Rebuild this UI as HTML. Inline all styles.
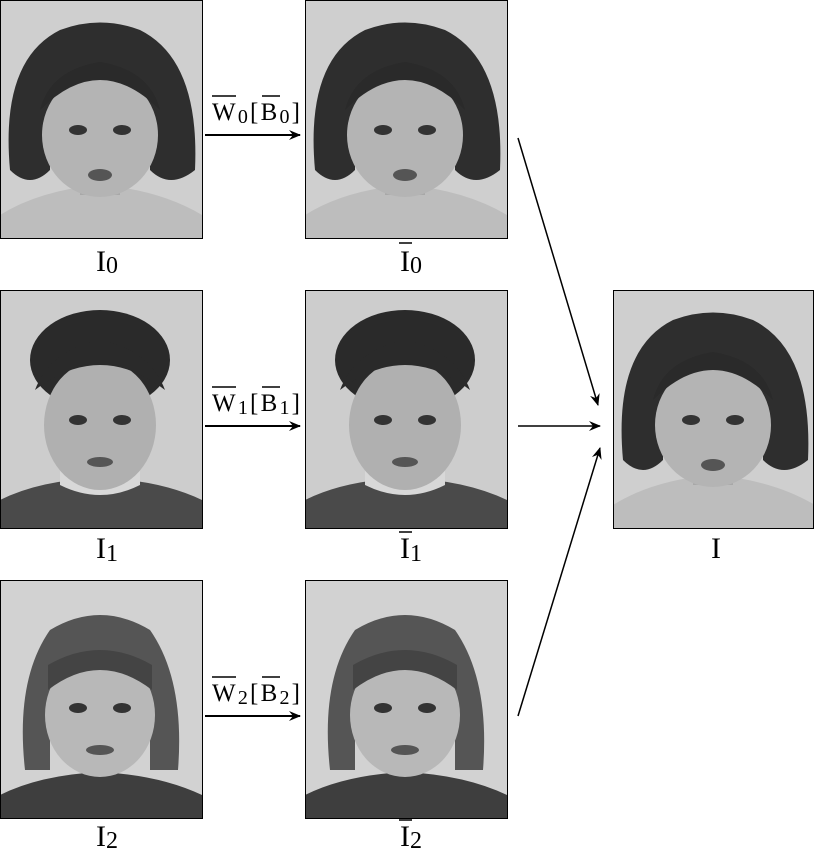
<!DOCTYPE html>
<html><head><meta charset="utf-8"><style>
body{margin:0;background:#fff;width:814px;height:852px;overflow:hidden}
svg{display:block}
text{font-family:"Liberation Serif",serif;fill:#000}
</style></head><body>
<svg width="814" height="852" viewBox="0 0 814 852" xmlns="http://www.w3.org/2000/svg">
<defs>
<marker id="ah" markerWidth="12" markerHeight="10" refX="11" refY="5" orient="auto" markerUnits="userSpaceOnUse"><path d="M0,0 L12,5 L0,10 L4,5 z" fill="#000"/></marker>
<g id="pA">
<rect width="202" height="238" fill="#cfcfcf"/>
<path d="M0,238 L0,215 Q40,190 100,185 Q160,190 202,215 L202,238 z" fill="#bdbdbd"/>
<path d="M10,170 Q0,60 60,30 Q100,15 140,30 Q200,60 195,170 Q170,190 150,170 L150,110 L50,110 L50,170 Q30,190 10,170z" fill="#2e2e2e"/>
<rect x="80" y="160" width="40" height="35" fill="#a8a8a8"/>
<ellipse cx="100" cy="135" rx="58" ry="62" fill="#b4b4b4"/>
<path d="M40,110 Q100,50 160,110 Q150,70 100,62 Q50,70 40,110z" fill="#2a2a2a"/>
<ellipse cx="78" cy="130" rx="9" ry="5" fill="#333"/><ellipse cx="122" cy="130" rx="9" ry="5" fill="#333"/>
<ellipse cx="100" cy="175" rx="12" ry="6" fill="#555"/>
</g>
<g id="pB">
<rect width="202" height="238" fill="#cdcdcd"/>
<path d="M0,238 L0,210 Q40,190 100,188 Q160,190 202,210 L202,238 z" fill="#4a4a4a"/>
<path d="M60,195 Q100,215 140,195 L140,180 L60,180z" fill="#d8d8d8"/>
<ellipse cx="100" cy="70" rx="70" ry="50" fill="#2a2a2a"/>
<ellipse cx="100" cy="135" rx="56" ry="65" fill="#b0b0b0"/>
<path d="M35,100 Q100,50 165,100 Q150,60 100,50 Q50,60 35,100z" fill="#2a2a2a"/>
<ellipse cx="78" cy="130" rx="9" ry="5" fill="#333"/><ellipse cx="122" cy="130" rx="9" ry="5" fill="#333"/>
<ellipse cx="100" cy="172" rx="13" ry="5" fill="#555"/>
</g>
<g id="pC">
<rect width="202" height="238" fill="#d2d2d2"/>
<path d="M0,238 L0,215 Q40,195 100,192 Q160,195 202,215 L202,238 z" fill="#3e3e3e"/>
<path d="M25,190 Q15,100 50,50 Q100,20 150,50 Q185,100 178,190 L150,190 L150,110 L50,110 L50,190z" fill="#555"/>
<ellipse cx="100" cy="135" rx="55" ry="62" fill="#b8b8b8"/>
<path d="M48,110 Q100,70 152,110 L152,85 Q100,55 48,85z" fill="#444"/>
<ellipse cx="78" cy="128" rx="9" ry="5" fill="#333"/><ellipse cx="122" cy="128" rx="9" ry="5" fill="#333"/>
<ellipse cx="100" cy="170" rx="14" ry="5" fill="#555"/>
</g>
</defs>
<use href="#pA" x="0" y="0"/><use href="#pA" x="305" y="0"/>
<use href="#pB" x="0" y="290"/><use href="#pB" x="305" y="290"/>
<use href="#pC" x="0" y="580"/><use href="#pC" x="305" y="580"/>
<use href="#pA" x="613" y="290"/>
<g fill="none" stroke="#000">
<rect x="0.5" y="0.5" width="202" height="238"/><rect x="305.5" y="0.5" width="202" height="238"/>
<rect x="0.5" y="290.5" width="202" height="238"/><rect x="305.5" y="290.5" width="202" height="238"/>
<rect x="0.5" y="580.5" width="202" height="238"/><rect x="305.5" y="580.5" width="202" height="238"/>
<rect x="613.5" y="290.5" width="200" height="238"/>
</g>
<g stroke="#000" stroke-width="2" marker-end="url(#ah)">
<line x1="205" y1="135" x2="300" y2="135"/>
<line x1="205" y1="426" x2="300" y2="426"/>
<line x1="205" y1="716" x2="300" y2="716"/>
<line x1="518" y1="426" x2="600" y2="426" stroke-width="1.6"/>
<line x1="518" y1="138" x2="598" y2="405" stroke-width="1.5"/>
<line x1="518" y1="716" x2="600" y2="448" stroke-width="1.5"/>
</g>
<g font-size="30">
<text x="96" y="271">I<tspan font-size="24" dy="2">0</tspan></text>
<text x="400" y="271">I<tspan font-size="24" dy="2">0</tspan></text>
<text x="96" y="558">I<tspan font-size="24" dy="3">1</tspan></text>
<text x="400" y="558">I<tspan font-size="24" dy="3">1</tspan></text>
<text x="96" y="846">I<tspan font-size="24" dy="2">2</tspan></text>
<text x="400" y="846">I<tspan font-size="24" dy="2">2</tspan></text>
<text x="711" y="558">I</text>
</g>
<g stroke="#000" stroke-width="1.5">
<line x1="399" y1="243" x2="412" y2="243"/>
<line x1="399" y1="532" x2="412" y2="532"/>
<line x1="399" y1="820" x2="412" y2="820"/>
<line x1="212" y1="96" x2="236" y2="96"/><line x1="262" y1="96" x2="280" y2="96"/>
<line x1="212" y1="387" x2="236" y2="387"/><line x1="262" y1="387" x2="280" y2="387"/>
<line x1="212" y1="677" x2="236" y2="677"/><line x1="262" y1="677" x2="280" y2="677"/>
</g>
<g font-size="25">
<text x="212" y="120" textLength="88" lengthAdjust="spacing">W<tspan font-size="20" dy="3">0</tspan><tspan dy="-3">[B</tspan><tspan font-size="20" dy="3">0</tspan><tspan dy="-3">]</tspan></text>
<text x="212" y="411" textLength="88" lengthAdjust="spacing">W<tspan font-size="20" dy="3">1</tspan><tspan dy="-3">[B</tspan><tspan font-size="20" dy="3">1</tspan><tspan dy="-3">]</tspan></text>
<text x="212" y="701" textLength="88" lengthAdjust="spacing">W<tspan font-size="20" dy="3">2</tspan><tspan dy="-3">[B</tspan><tspan font-size="20" dy="3">2</tspan><tspan dy="-3">]</tspan></text>
</g>
</svg>
</body></html>
